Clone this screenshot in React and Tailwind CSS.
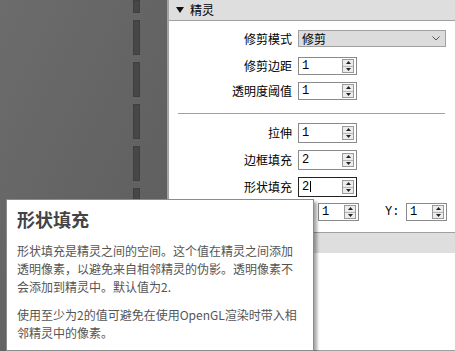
import React from "react";

const cjk = { fontFamily: '"Noto Sans CJK SC", "Noto Sans", sans-serif' };

function SpinButtons() {
  return (
    <div className="ml-auto mr-[2px] flex h-[14px] w-[12px] flex-col border border-[#9a9a9a] bg-[#ececec]">
      <div className="flex flex-1 items-center justify-center border-b border-[#b5b5b5]">
        <svg width="5" height="3" viewBox="0 0 5 3">
          <polygon points="2.5,0 5,3 0,3" fill="#222" />
        </svg>
      </div>
      <div className="flex flex-1 items-center justify-center">
        <svg width="5" height="3" viewBox="0 0 5 3">
          <polygon points="0,0 5,0 2.5,3" fill="#222" />
        </svg>
      </div>
    </div>
  );
}

function SpinBox({ value, focused, h = "h-[18px]", w = "w-[59px]" }) {
  return (
    <div
      className={`flex ${h} ${w} items-center border bg-white pl-[3px] ${
        focused ? "border-[#222]" : "border-[#8a8a8a]"
      }`}
    >
      <span className="text-[12px] leading-none text-black" style={{ fontFamily: '"Liberation Mono", monospace' }}>
        {value}
        {focused ? <span className="ml-px inline-block h-[11px] w-px bg-black align-middle" /> : null}
      </span>
      <SpinButtons />
    </div>
  );
}

function Row({ label, children, className }) {
  return (
    <div className={`flex items-center gap-[6px] ${className}`}>
      <div className="w-[123px] text-right text-[12px] leading-none text-black">{label}</div>
      {children}
    </div>
  );
}

export default function App() {
  return (
    <div className="relative flex h-[351px] w-[455px] overflow-hidden bg-white" style={cjk}>
      {/* canvas */}
      <div className="relative w-[167px] bg-gradient-to-br from-[#6c6c6c] to-[#5c5c5c]">
        <div className="ml-[133px] flex w-[7px] flex-col gap-[7px] pt-0">
          <div className="h-[13px] border border-[#3f3f3f] bg-[#474747]" />
          {[0, 1, 2, 3, 4, 5, 6, 7].map((i) => (
            <div key={i} className="h-[35px] border border-[#3f3f3f] bg-[#474747]" />
          ))}
        </div>
      </div>
      <div className="w-[2px] bg-[#a3a3a3]" />

      {/* properties panel */}
      <div className="flex flex-1 flex-col">
        <div className="flex h-[21px] items-center border-b border-[#a0a0a0] bg-[#dedede] pl-[7px]">
          <svg width="8" height="6" viewBox="0 0 8 6" className="mr-[6px]">
            <polygon points="0,0 8,0 4,6" fill="#111" />
          </svg>
          <span className="text-[12px] leading-none text-black">精灵</span>
        </div>

        <Row label="修剪模式" className="mt-[9px]">
          <div className="flex h-[17px] w-[148px] items-center border border-[#a0a0a0] bg-[#dcdcdc] pl-[3px] pr-[5px]">
            <span className="text-[12px] leading-none text-black">修剪</span>
            <svg width="8" height="5" viewBox="0 0 8 5" className="ml-auto">
              <polyline points="0.5,0.5 4,4 7.5,0.5" fill="none" stroke="#555" strokeWidth="1" />
            </svg>
          </div>
        </Row>
        <Row label="修剪边距" className="mt-[10px]">
          <SpinBox value="1" />
        </Row>
        <Row label="透明度阈值" className="mt-[7px]">
          <SpinBox value="1" />
        </Row>

        <div className="ml-[9px] mr-[10px] mt-[13px] h-px bg-[#a0a0a0]" />

        <Row label="拉伸" className="mt-[9px]">
          <SpinBox value="1" h="h-[20px]" />
        </Row>
        <Row label="边框填充" className="mt-[7px]">
          <SpinBox value="2" h="h-[20px]" />
        </Row>
        <Row label="形状填充" className="mt-[7px]">
          <SpinBox value="2" h="h-[20px]" focused />
        </Row>

        <div className="mt-[6px] flex items-center">
          <span className="ml-[131px] w-[18px] text-[12px] leading-none" style={{ fontFamily: '"Liberation Mono", monospace' }}>
            X:
          </span>
          <SpinBox value="1" w="w-[41px]" />
          <span className="ml-[26px] w-[21px] text-[12px] leading-none" style={{ fontFamily: '"Liberation Mono", monospace' }}>
            Y:
          </span>
          <SpinBox value="1" w="w-[41px]" />
        </div>

        <div className="mt-[11px] h-[21px] border-t border-[#a0a0a0] bg-[#dedede]" />
        <div className="flex-1 border-b border-[#a0a0a0] bg-white" />
      </div>

      {/* tooltip */}
      <div className="absolute left-[6px] top-[199px] w-[308px] border border-[#8c8c8c] bg-white px-[10px] pb-[8px] pt-[8px] shadow-[3px_3px_3px_rgba(0,0,0,0.35)]">
        <div className="text-[18px] font-bold leading-[22px] text-[#444]">形状填充</div>
        <p className="mt-[12px] text-[12px] leading-[18px] text-[#555]">
          形状填充是精灵之间的空间。这个值在精灵之间添加透明像素，以避免来自相邻精灵的伪影。透明像素不会添加到精灵中。默认值为2.
        </p>
        <p className="mt-[10px] text-[12px] leading-[18px] text-[#555]">
          使用至少为2的值可避免在使用OpenGL渲染时带入相邻精灵中的像素。
        </p>
      </div>
    </div>
  );
}
